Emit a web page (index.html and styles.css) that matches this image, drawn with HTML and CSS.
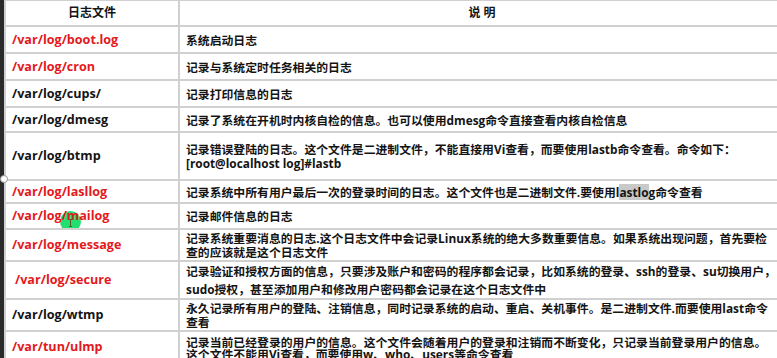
FILE: index.html
```html
<!DOCTYPE html>
<html lang="zh-CN">
<head>
<meta charset="utf-8">
<title>日志文件</title>
<link rel="stylesheet" href="styles.css">
</head>
<body>
<div class="page">
  <div class="strip"><span class="dot"></span></div>
  <table class="logs">
    <colgroup><col class="c1"><col class="c2"></colgroup>
    <tr class="r-head">
      <th>日志文件</th>
      <th>说 明</th>
    </tr>
    <tr class="r27"><td class="red">/var/log/boot.log</td><td>系统启动日志</td></tr>
    <tr class="r27"><td class="red">/var/log/cron</td><td>记录与系统定时任务相关的日志</td></tr>
    <tr class="r27"><td>/var/log/cups/</td><td>记录打印信息的日志</td></tr>
    <tr class="r25"><td>/var/log/dmesg</td><td>记录了系统在开机时内核自检的信息。也可以使用dmesg命令直接查看内核自检信息</td></tr>
    <tr class="r48"><td>/var/log/btmp</td><td>记录错误登陆的日志。这个文件是二进制文件，不能直接用Vi查看，而要使用lastb命令查看。命令如下：<br>[root@localhost log]#lastb</td></tr>
    <tr class="r23"><td class="red">/var/log/lasllog</td><td>记录系统中所有用户最后一次的登录时间的日志。这个文件也是二进制文件.要使用l<span class="sel">astlo</span>g命令查看</td></tr>
    <tr class="r26"><td class="red cursor-cell"><span class="cursor"><span class="ibeam"></span></span><span class="txt">/var/log/mailog</span></td><td>记录邮件信息的日志</td></tr>
    <tr class="r32"><td class="red">/var/log/message</td><td>记录系统重要消息的日志.这个日志文件中会记录Linux系统的绝大多数重要信息。如果系统出现问题，首先要检<br>查的应该就是这个日志文件</td></tr>
    <tr class="r38"><td class="red indent">/var/log/secure</td><td class="loose">记录验证和授权方面的信息，只要涉及账户和密码的程序都会记录，比如系统的登录、ssh的登录、su切换用户，<br>sudo授权，甚至添加用户和修改用户密码都会记录在这个日志文件中</td></tr>
    <tr class="r32"><td>/var/log/wtmp</td><td>永久记录所有用户的登陆、注销信息，同时记录系统的启动、重启、关机事件。是二进制文件.而要使用last命令<br>查看</td></tr>
    <tr class="r32"><td class="red">/var/tun/ulmp</td><td class="tight">记录当前已经登录的用户的信息。这个文件会随着用户的登录和注销而不断变化，只记录当前登录用户的信息。<br>这个文件不能用Vi查看，而要使用w、who、users等命令查看</td></tr>
  </table>
</div>
</body>
</html>
```

FILE: styles.css
```css
html, body {
  margin: 0;
  padding: 0;
  background: #ffffff;
  overflow: hidden;
}

.page {
  display: flex;
  width: 777px;
  height: 358px;
  overflow: hidden;
  font-family: "Open Sans", "Noto Sans CJK SC", sans-serif;
  font-weight: 700;
  color: #141414;
}

.strip {
  position: relative;
  flex: 0 0 4px;
  background: #2a2a2a;
}

.dot {
  position: absolute;
  left: 0;
  top: 175px;
  width: 6px;
  height: 6px;
  border-radius: 50%;
  background: #ffffff;
  border: 1px solid #9a9a9a;
}

.logs {
  flex: 0 0 780px;
  width: 780px;
  border-collapse: collapse;
  table-layout: fixed;
  margin-top: -1px;
}

.c1 { width: 174px; }
.c2 { width: 606px; }

.logs th,
.logs td {
  border: 2px solid #d0d0d0;
  padding: 0 6px;
  line-height: 14px;
  vertical-align: middle;
  white-space: nowrap;
  overflow: hidden;
}

.logs th {
  font-size: 12px;
  text-align: center;
}

.logs td:first-child {
  font-size: 12.6px;
  padding-left: 6px;
}

.logs td + td {
  font-size: 11.85px;
  padding-left: 6px;
}

.r-head { height: 26px; }
.r27 { height: 27px; }
.r25 { height: 25px; }
.r48 { height: 48px; }
.r23 { height: 23px; }
.r26 { height: 26px; }
.r32 { height: 32px; }
.r38 { height: 38px; }

.red { color: #e3191c; }
.indent { padding-left: 9px !important; }

.loose { line-height: 18px !important; }
.tight { vertical-align: top !important; padding-top: 4px !important; line-height: 12px !important; }

.sel {
  background: #c9c9c9;
}

.cursor-cell {
  position: relative;
}

.cursor {
  position: absolute;
  left: 54px;
  top: 7px;
  width: 21px;
  height: 21px;
  border-radius: 50%;
  background: #22e070;
}

.ibeam {
  position: absolute;
  left: 9px;
  top: 8px;
  width: 3px;
  height: 8px;
  border-top: 1px solid #5a5a2a;
  border-bottom: 1px solid #5a5a2a;
  box-sizing: border-box;
}

.ibeam::before {
  content: "";
  position: absolute;
  left: 1px;
  top: 0;
  width: 1px;
  height: 100%;
  background: #5a5a2a;
}

.txt {
  position: relative;
}
```
